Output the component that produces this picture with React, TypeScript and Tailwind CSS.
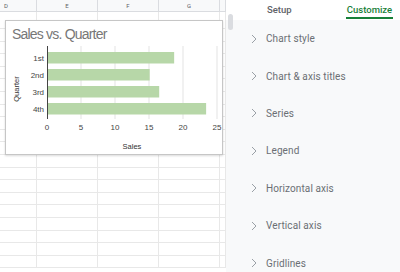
import React from 'react';

const cols = [
  { label: 'D', w: 'w-[37px]', pad: 'pl-[4px]' },
  { label: 'E', w: 'w-[61px]', pad: 'justify-center' },
  { label: 'F', w: 'w-[61px]', pad: 'justify-center' },
  { label: 'G', w: 'w-[61px]', pad: 'justify-center' },
  { label: '', w: 'w-[6px]', pad: '' },
];

const sections = [
  'Chart style',
  'Chart & axis titles',
  'Series',
  'Legend',
  'Horizontal axis',
  'Vertical axis',
  'Gridlines',
];

const bars = [
  { label: '1st', value: 18.7 },
  { label: '2nd', value: 15.1 },
  { label: '3rd', value: 16.5 },
  { label: '4th', value: 23.4 },
];

function Chart() {
  const x0 = 41;
  const unit = 6.8;
  return (
    <div className="absolute left-[5px] top-[20px] w-[218px] h-[135px] bg-white border border-[#c6c6c6] shadow-[0_1px_2px_rgba(0,0,0,0.15)]">
      <div className="absolute left-[6px] top-[4px] text-[14px] tracking-[-0.8px] text-[#777] font-['Liberation_Sans',sans-serif] leading-[18px]">
        Sales vs. Quarter
      </div>
      <svg width="216" height="133" className="absolute left-0 top-0 font-['Liberation_Sans',sans-serif]">
        {[5, 10, 15, 20, 25].map(t => (
          <line key={t} x1={x0 + t * unit} x2={x0 + t * unit} y1={25} y2={98} stroke="#e3e3e3" strokeWidth="1" />
        ))}
        {bars.map((b, i) => (
          <g key={b.label}>
            <rect x={x0 + 1} y={31 + i * 17} width={b.value * unit - 1} height={11.5} fill="#b7d7a8" />
            <text x={38} y={40 + i * 17} fontSize="8" fill="#444" textAnchor="end">{b.label}</text>
          </g>
        ))}
        <line x1={x0 + 0.5} x2={x0 + 0.5} y1={25} y2={98} stroke="#444" strokeWidth="1" />
        {[0, 5, 10, 15, 20, 25].map(t => (
          <text key={t} x={x0 + t * unit} y={109} fontSize="8" fill="#444" textAnchor="middle">{t}</text>
        ))}
        <text x={126} y={128} fontSize="7.5" fill="#333" textAnchor="middle">Sales</text>
        <text x={13} y={68} fontSize="7.5" fill="#333" textAnchor="middle" transform="rotate(-90 13 68)">Quarter</text>
      </svg>
    </div>
  );
}

export default function App() {
  const rows = Array.from({ length: 20 }, (_, i) => (i === 0 ? 'h-[17px]' : 'h-[12.6px]'));

  return (
    <div className="w-[400px] h-[272px] overflow-hidden flex bg-white font-['Roboto',sans-serif]">
      {/* sheet grid */}
      <div className="relative w-[226px] h-full shrink-0">
        <div className="flex h-[12px] border-b border-[#dadce0] bg-[#f8f9fa]">
          {cols.map((c, i) => (
            <div key={i} className={`${c.w} ${c.pad} h-full shrink-0 border-r border-[#dadce0] flex items-center text-[6px] text-[#5f6368]`}>
              {c.label}
            </div>
          ))}
        </div>
        {rows.map((h, r) => (
          <div key={r} className={`flex ${h} border-b border-[#e8e8e8]`}>
            {cols.map((c, i) => (
              <div key={i} className={`${c.w} h-full shrink-0 border-r border-[#e8e8e8]`} />
            ))}
          </div>
        ))}
        <Chart />
      </div>

      {/* scrollbar */}
      <div className="w-[7px] h-full shrink-0 flex flex-col">
        <div className="h-[20px] shrink-0 bg-white relative">
          <div className="absolute left-[2px] top-[14px] w-[5px] h-[16px] rounded-full bg-[#dadce0]" />
        </div>
        <div className="flex-1 bg-[#f8f9fa]" />
      </div>

      {/* side panel */}
      <div className="flex-1 h-full flex flex-col overflow-hidden">
        <div className="h-[20px] shrink-0 bg-white flex items-center text-[9.5px] font-medium">
          <span className="ml-[34px] text-[#5f6368]">Setup</span>
          <div className="ml-auto mr-[7px] w-[47px] h-full flex flex-col items-center justify-center relative">
            <span className="text-[#188038]">Customize</span>
            <div className="absolute bottom-[1px] left-0 right-0 h-[2px] bg-[#188038]" />
          </div>
        </div>
        <div className="flex-1 bg-[#f8f9fa] flex flex-col">
          {sections.map(s => (
            <div key={s} className="h-[37.4px] shrink-0 flex items-center">
              <svg width="6" height="10" viewBox="0 0 6 10" className="ml-[18px] shrink-0">
                <polyline points="1,1 5,5 1,9" fill="none" stroke="#9aa0a6" strokeWidth="1" />
              </svg>
              <span className="ml-[9px] text-[10px] tracking-[0.1px] text-[#6b6f74]">{s}</span>
            </div>
          ))}
        </div>
      </div>
    </div>
  );
}
